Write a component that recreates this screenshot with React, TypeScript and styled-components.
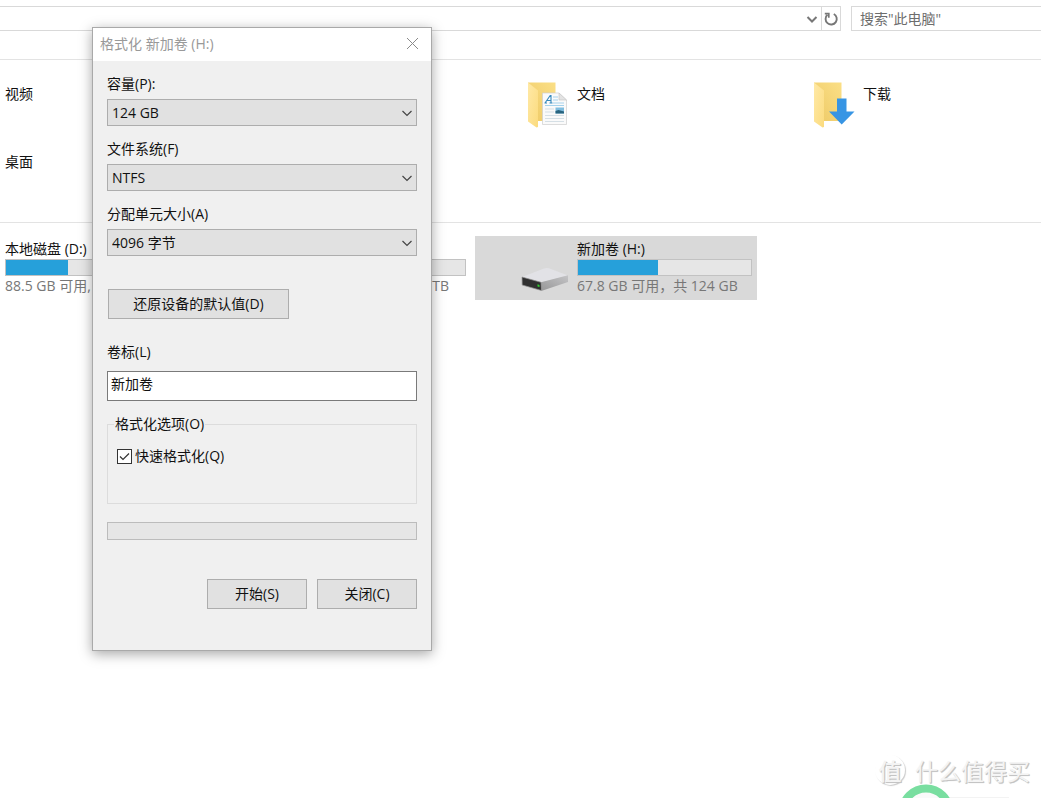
import React from "react";
import styled, { createGlobalStyle } from "styled-components";

const GlobalStyle = createGlobalStyle`
  *, *::before, *::after { box-sizing: border-box; }
  html, body { margin: 0; background: #fff; }
  body, button, input, select {
    font-family: "Open Sans", "Noto Sans CJK SC", sans-serif;
    font-size: 14px;
    line-height: 20px;
    color: #111;
  }
`;

const Page = styled.div`
  position: relative;
  min-height: 100vh;
  overflow: hidden;
  background: #fff;
`;

const Toolbar = styled.header`
  display: flex;
  gap: 10px;
  height: 60px;
  padding-top: 6px;
  border-bottom: 1px solid #e3e3e3;
`;

const AddressBar = styled.div`
  display: flex;
  flex: 1;
  justify-content: flex-end;
  height: 25px;
  border: 1px solid #d9d9d9;
  border-left: 0;
`;

const BarButton = styled.button<{ $divided?: boolean }>`
  display: flex;
  align-items: center;
  justify-content: center;
  width: 19px;
  padding: 0;
  border: 0;
  border-left: ${(p) => (p.$divided ? "1px solid #d9d9d9" : "0")};
  background: transparent;
`;

const SearchBox = styled.input`
  width: 190px;
  height: 25px;
  padding: 0 8px;
  border: 1px solid #d9d9d9;
  border-right: 0;
  border-radius: 0;
  outline: 0;
  background: #fff;
  &::placeholder { color: #6d6d6d; opacity: 1; }
`;

const TileGrid = styled.section<{ $divider?: boolean }>`
  display: grid;
  grid-template-columns: repeat(4, 282px);
  grid-auto-rows: 64px;
  gap: 4px;
  padding: 13px 0 17px;
  margin-left: -97px;
  border-bottom: ${(p) => (p.$divider ? "1px solid #e3e3e3" : "0")};
`;

const Tile = styled.article<{ $selected?: boolean; $column?: number }>`
  display: grid;
  grid-template-columns: 94px 1fr;
  column-gap: 8px;
  padding-right: 5px;
  grid-column: ${(p) => p.$column ?? "auto"};
  background: ${(p) => (p.$selected ? "#d9d9d9" : "transparent")};
`;

const TileIcon = styled.div`
  display: flex;
  align-items: center;
  justify-content: flex-end;
`;

const TileText = styled.div<{ $folder?: boolean }>`
  display: flex;
  flex-direction: column;
  padding-top: ${(p) => (p.$folder ? "11px" : "3px")};
`;

const Name = styled.span`
  height: 20px;
  white-space: nowrap;
`;

const Usage = styled.div`
  height: 17px;
  border: 1px solid #c2c2c2;
  background: #e6e6e6;
`;

const UsageFill = styled.div`
  height: 100%;
  background: #26a0da;
`;

const Detail = styled.span<{ $end?: boolean }>`
  color: #777;
  white-space: nowrap;
  text-align: ${(p) => (p.$end ? "right" : "left")};
  padding-right: ${(p) => (p.$end ? "17px" : "0")};
`;

const Dialog = styled.section`
  position: absolute;
  top: 27px;
  left: 92px;
  width: 340px;
  border: 1px solid #a9a9a9;
  background: #f0f0f0;
  box-shadow: 0 3px 12px rgba(0, 0, 0, 0.35);
`;

const TitleBar = styled.header`
  display: flex;
  align-items: center;
  justify-content: space-between;
  height: 33px;
  padding: 0 12px 2px 7px;
  background: #fff;
`;

const Title = styled.h1`
  margin: 0;
  font-size: 14px;
  font-weight: 400;
  color: #999;
`;

const CloseButton = styled.button`
  display: flex;
  padding: 0;
  border: 0;
  background: transparent;
`;

const Form = styled.form`
  display: flex;
  flex-direction: column;
  padding: 13px 14px 41px;
`;

const Field = styled.div<{ $gap: number; $after: number }>`
  display: flex;
  flex-direction: column;
  gap: ${(p) => p.$gap}px;
  margin-bottom: ${(p) => p.$after}px;
`;

const SelectWrap = styled.div`
  display: grid;
  align-items: center;
  & > * { grid-area: 1 / 1; }
  & > svg { justify-self: end; margin-right: 4px; pointer-events: none; }
`;

const Select = styled.select`
  appearance: none;
  width: 100%;
  height: 27px;
  padding: 0 24px 0 4px;
  border: 1px solid #adadad;
  border-radius: 0;
  background: #e1e1e1;
`;

const TextInput = styled.input`
  height: 30px;
  padding: 0 3px 6px;
  border: 1px solid #7a7a7a;
  border-radius: 0;
  background: #fff;
  line-height: 22px;
`;

const Button = styled.button<{ $width: number }>`
  width: ${(p) => p.$width}px;
  height: 30px;
  padding: 0;
  border: 1px solid #adadad;
  border-radius: 0;
  background: #e1e1e1;
`;

const ResetRow = styled.div`
  padding-left: 1px;
  margin: 20px 0 23px;
`;

const Options = styled.fieldset`
  height: 90px;
  min-width: 0;
  margin: 0 0 18px;
  padding: 12px 9px;
  border: 1px solid #dcdcdc;
`;

const Legend = styled.legend`
  margin-left: -3px;
  padding: 0 1px;
`;

const CheckRow = styled.label`
  display: flex;
  align-items: center;
  gap: 3px;
`;

const CheckFrame = styled.span`
  display: grid;
  & > * { grid-area: 1 / 1; }
  & > svg { pointer-events: none; }
`;

const Checkbox = styled.input`
  appearance: none;
  width: 15px;
  height: 15px;
  margin: 0;
  border: 1px solid #333;
  background: #fff;
  & + svg { visibility: hidden; }
  &:checked + svg { visibility: visible; }
`;

const Progress = styled.div`
  height: 18px;
  margin-bottom: 39px;
  border: 1px solid #bcbcbc;
  background: #e6e6e6;
`;

const Actions = styled.div`
  display: flex;
  justify-content: flex-end;
  gap: 10px;
`;

const Watermark = styled.div`
  position: absolute;
  right: 11px;
  bottom: 11px;
  display: flex;
  align-items: center;
  gap: 10px;
  font-family: "Noto Sans CJK SC", sans-serif;
  font-size: 23px;
  line-height: 34px;
  color: #f4f4f4;
  text-shadow: 1px 1px 0 #c4c4c4, 1px 1px 1px #c4c4c4;
`;

const Seal = styled.span`
  display: flex;
  align-items: center;
  justify-content: center;
  width: 30px;
  height: 30px;
  border-radius: 50%;
  font-weight: 500;
  box-shadow: 1px 1px 1px #ccc;
`;

const Ring = styled.svg`
  position: absolute;
  right: 16px;
  bottom: 0;
`;

const Chevron = ({ color = "#444", width = 1.2 }: { color?: string; width?: number }) => (
  <svg width="12" height="12" viewBox="0 0 12 12" fill="none" aria-hidden="true">
    <path d="M1.5 4 6 8.5 10.5 4" stroke={color} strokeWidth={width} />
  </svg>
);

const Refresh = () => (
  <svg width="16" height="16" viewBox="0 0 16 16" fill="none" aria-hidden="true">
    <path d="M10.8 3A5.6 5.6 0 1 1 4.4 3.8" stroke="#777" strokeWidth="1.9" />
    <path d="M1.8 2.6H5.8V6.8" stroke="#777" strokeWidth="1.7" />
  </svg>
);

const FolderBody = () => (
  <>
    <defs>
      <linearGradient id="folderBack" x1="0" y1="1" x2="1" y2="0">
        <stop offset="0" stopColor="#edc966" />
        <stop offset="1" stopColor="#fbdf86" />
      </linearGradient>
      <linearGradient id="folderFlap" x1="0" y1="0" x2="1" y2="1">
        <stop offset="0" stopColor="#ffe9a6" />
        <stop offset="1" stopColor="#fbdb7e" />
      </linearGradient>
    </defs>
    <path d="M7 1.5H34.5V40H7Z" fill="url(#folderBack)" />
    <path d="M7 1.5 17 9.5V46L15.5 46.5 7 40.5Z" fill="url(#folderFlap)" />
  </>
);

const DocumentsIcon = () => (
  <svg width="48" height="48" viewBox="0 0 48 48" aria-hidden="true">
    <FolderBody />
    <path d="M21.5 12H38L45.5 19V43.5H21.5Z" fill="#fafafa" stroke="#cfcfcf" strokeWidth=".7" />
    <path d="M38 12V19H45.5Z" fill="#e3e3e3" stroke="#c4c4c4" strokeWidth=".6" />
    <path d="M24 22 29.2 14.5H30V22M26 19.5H30M23.5 22H26M28.5 22H31.5" stroke="#3589bd" strokeWidth="1.1" fill="none" />
    <path d="M32 16H37M32 19H37M32 22H43M24 24.5H43" stroke="#a5d2ec" strokeWidth="1.1" />
    <path d="M24 28H33M24 31H33M24 34.5H43M24 37.5H43M24 40.5H43" stroke="#d5dfe5" strokeWidth="1" />
    <rect x="34.5" y="26.5" width="8.5" height="6" fill="#80bddf" />
    <path d="M34.5 30 37.5 29 43 30.5V32.5H34.5Z" fill="#28647f" />
  </svg>
);

const DownloadsIcon = () => (
  <svg width="48" height="48" viewBox="0 0 48 48" aria-hidden="true">
    <FolderBody />
    <path d="M30 17.5H39.5V30.5H47.5L34.7 43.5 22 30.5H30Z" fill="#3795e4" />
  </svg>
);

const DriveIcon = () => (
  <svg width="48" height="48" viewBox="0 0 48 48" aria-hidden="true">
    <defs>
      <linearGradient id="driveSide" x1="0" y1="1" x2="1" y2="0">
        <stop offset="0" stopColor="#979798" />
        <stop offset="1" stopColor="#c4c4c6" />
      </linearGradient>
    </defs>
    <path d="M1 33 23 24.5Q25 23.8 28 24.3L47 31.5 20.5 38.5Z" fill="#e2e2e6" />
    <path d="M20 38.3 47 31.3V38L21 46.7Z" fill="url(#driveSide)" />
    <path d="M1 33 20 38.3 20.5 46.5 1.2 41Z" fill="#303030" stroke="#929292" strokeWidth=".7" />
    <path d="M16.5 40.3 18.5 40.9V43.1L16.5 42.5Z" fill="#2fd02f" />
  </svg>
);

const DriveUsage = ({ percent }: { percent: number }) => (
  <Usage>
    <UsageFill style={{ width: `${percent}%` }} />
  </Usage>
);

const SelectField = ({ id, label, value }: { id: string; label: string; value: string }) => (
  <Field $gap={5} $after={13}>
    <label htmlFor={id}>{label}</label>
    <SelectWrap>
      <Select id={id} defaultValue={value}>
        <option>{value}</option>
      </Select>
      <Chevron />
    </SelectWrap>
  </Field>
);

export default function App() {
  return (
    <>
      <GlobalStyle />
      <Page>
        <Toolbar>
          <AddressBar>
            <BarButton aria-label="历史记录">
              <Chevron color="#777" width={2} />
            </BarButton>
            <BarButton $divided aria-label="刷新">
              <Refresh />
            </BarButton>
          </AddressBar>
          <SearchBox type="search" aria-label="搜索" placeholder={'搜索"此电脑"'} />
        </Toolbar>

        <main>
          <TileGrid $divider>
            <Tile $column={1}>
              <TileIcon />
              <TileText $folder><Name>视频</Name></TileText>
            </Tile>
            <Tile $column={3}>
              <TileIcon><DocumentsIcon /></TileIcon>
              <TileText $folder><Name>文档</Name></TileText>
            </Tile>
            <Tile $column={4}>
              <TileIcon><DownloadsIcon /></TileIcon>
              <TileText $folder><Name>下载</Name></TileText>
            </Tile>
            <Tile $column={1}>
              <TileIcon />
              <TileText $folder><Name>桌面</Name></TileText>
            </Tile>
          </TileGrid>
          <TileGrid>
            <Tile>
              <TileIcon />
              <TileText>
                <Name>本地磁盘 (D:)</Name>
                <DriveUsage percent={36} />
                <Detail>88.5 GB 可用,</Detail>
              </TileText>
            </Tile>
            <Tile>
              <TileIcon />
              <TileText>
                <Name />
                <DriveUsage percent={0} />
                <Detail $end>TB</Detail>
              </TileText>
            </Tile>
            <Tile $selected>
              <TileIcon><DriveIcon /></TileIcon>
              <TileText>
                <Name>新加卷 (H:)</Name>
                <DriveUsage percent={46} />
                <Detail>67.8 GB 可用，共 124 GB</Detail>
              </TileText>
            </Tile>
          </TileGrid>
        </main>

        <Dialog role="dialog" aria-labelledby="dialog-title">
          <TitleBar>
            <Title id="dialog-title">格式化 新加卷 (H:)</Title>
            <CloseButton aria-label="关闭">
              <svg width="13" height="13" viewBox="0 0 13 13" aria-hidden="true">
                <path d="M1 1 12 12M12 1 1 12" stroke="#8a8a8a" fill="none" />
              </svg>
            </CloseButton>
          </TitleBar>
          <Form onSubmit={(e) => e.preventDefault()}>
            <SelectField id="capacity" label="容量(P):" value="124 GB" />
            <SelectField id="filesystem" label="文件系统(F)" value="NTFS" />
            <SelectField id="unit" label="分配单元大小(A)" value="4096 字节" />
            <ResetRow>
              <Button type="button" $width={181}>还原设备的默认值(D)</Button>
            </ResetRow>
            <Field $gap={9} $after={13}>
              <label htmlFor="volume">卷标(L)</label>
              <TextInput id="volume" type="text" defaultValue="新加卷" />
            </Field>
            <Options>
              <Legend>格式化选项(O)</Legend>
              <CheckRow>
                <CheckFrame>
                  <Checkbox type="checkbox" defaultChecked />
                  <svg width="15" height="15" viewBox="0 0 15 15" aria-hidden="true">
                    <path d="M3 7.5 6 10.5 12 4.5" stroke="#333" strokeWidth="1.2" fill="none" />
                  </svg>
                </CheckFrame>
                快速格式化(Q)
              </CheckRow>
            </Options>
            <Progress role="progressbar" aria-label="格式化进度" aria-valuenow={0} />
            <Actions>
              <Button type="submit" $width={100}>开始(S)</Button>
              <Button type="button" $width={100}>关闭(C)</Button>
            </Actions>
          </Form>
        </Dialog>

        <Ring width="130" height="14" viewBox="0 0 130 14" aria-hidden="true">
          <path d="M48 13.5H114" stroke="#f3f3f3" />
          <circle cx="31" cy="28" r="23.5" fill="#fafafa" stroke="#79dea0" strokeWidth="8" />
        </Ring>
        <Watermark>
          <Seal>值</Seal>
          <span>什么值得买</span>
        </Watermark>
      </Page>
    </>
  );
}
